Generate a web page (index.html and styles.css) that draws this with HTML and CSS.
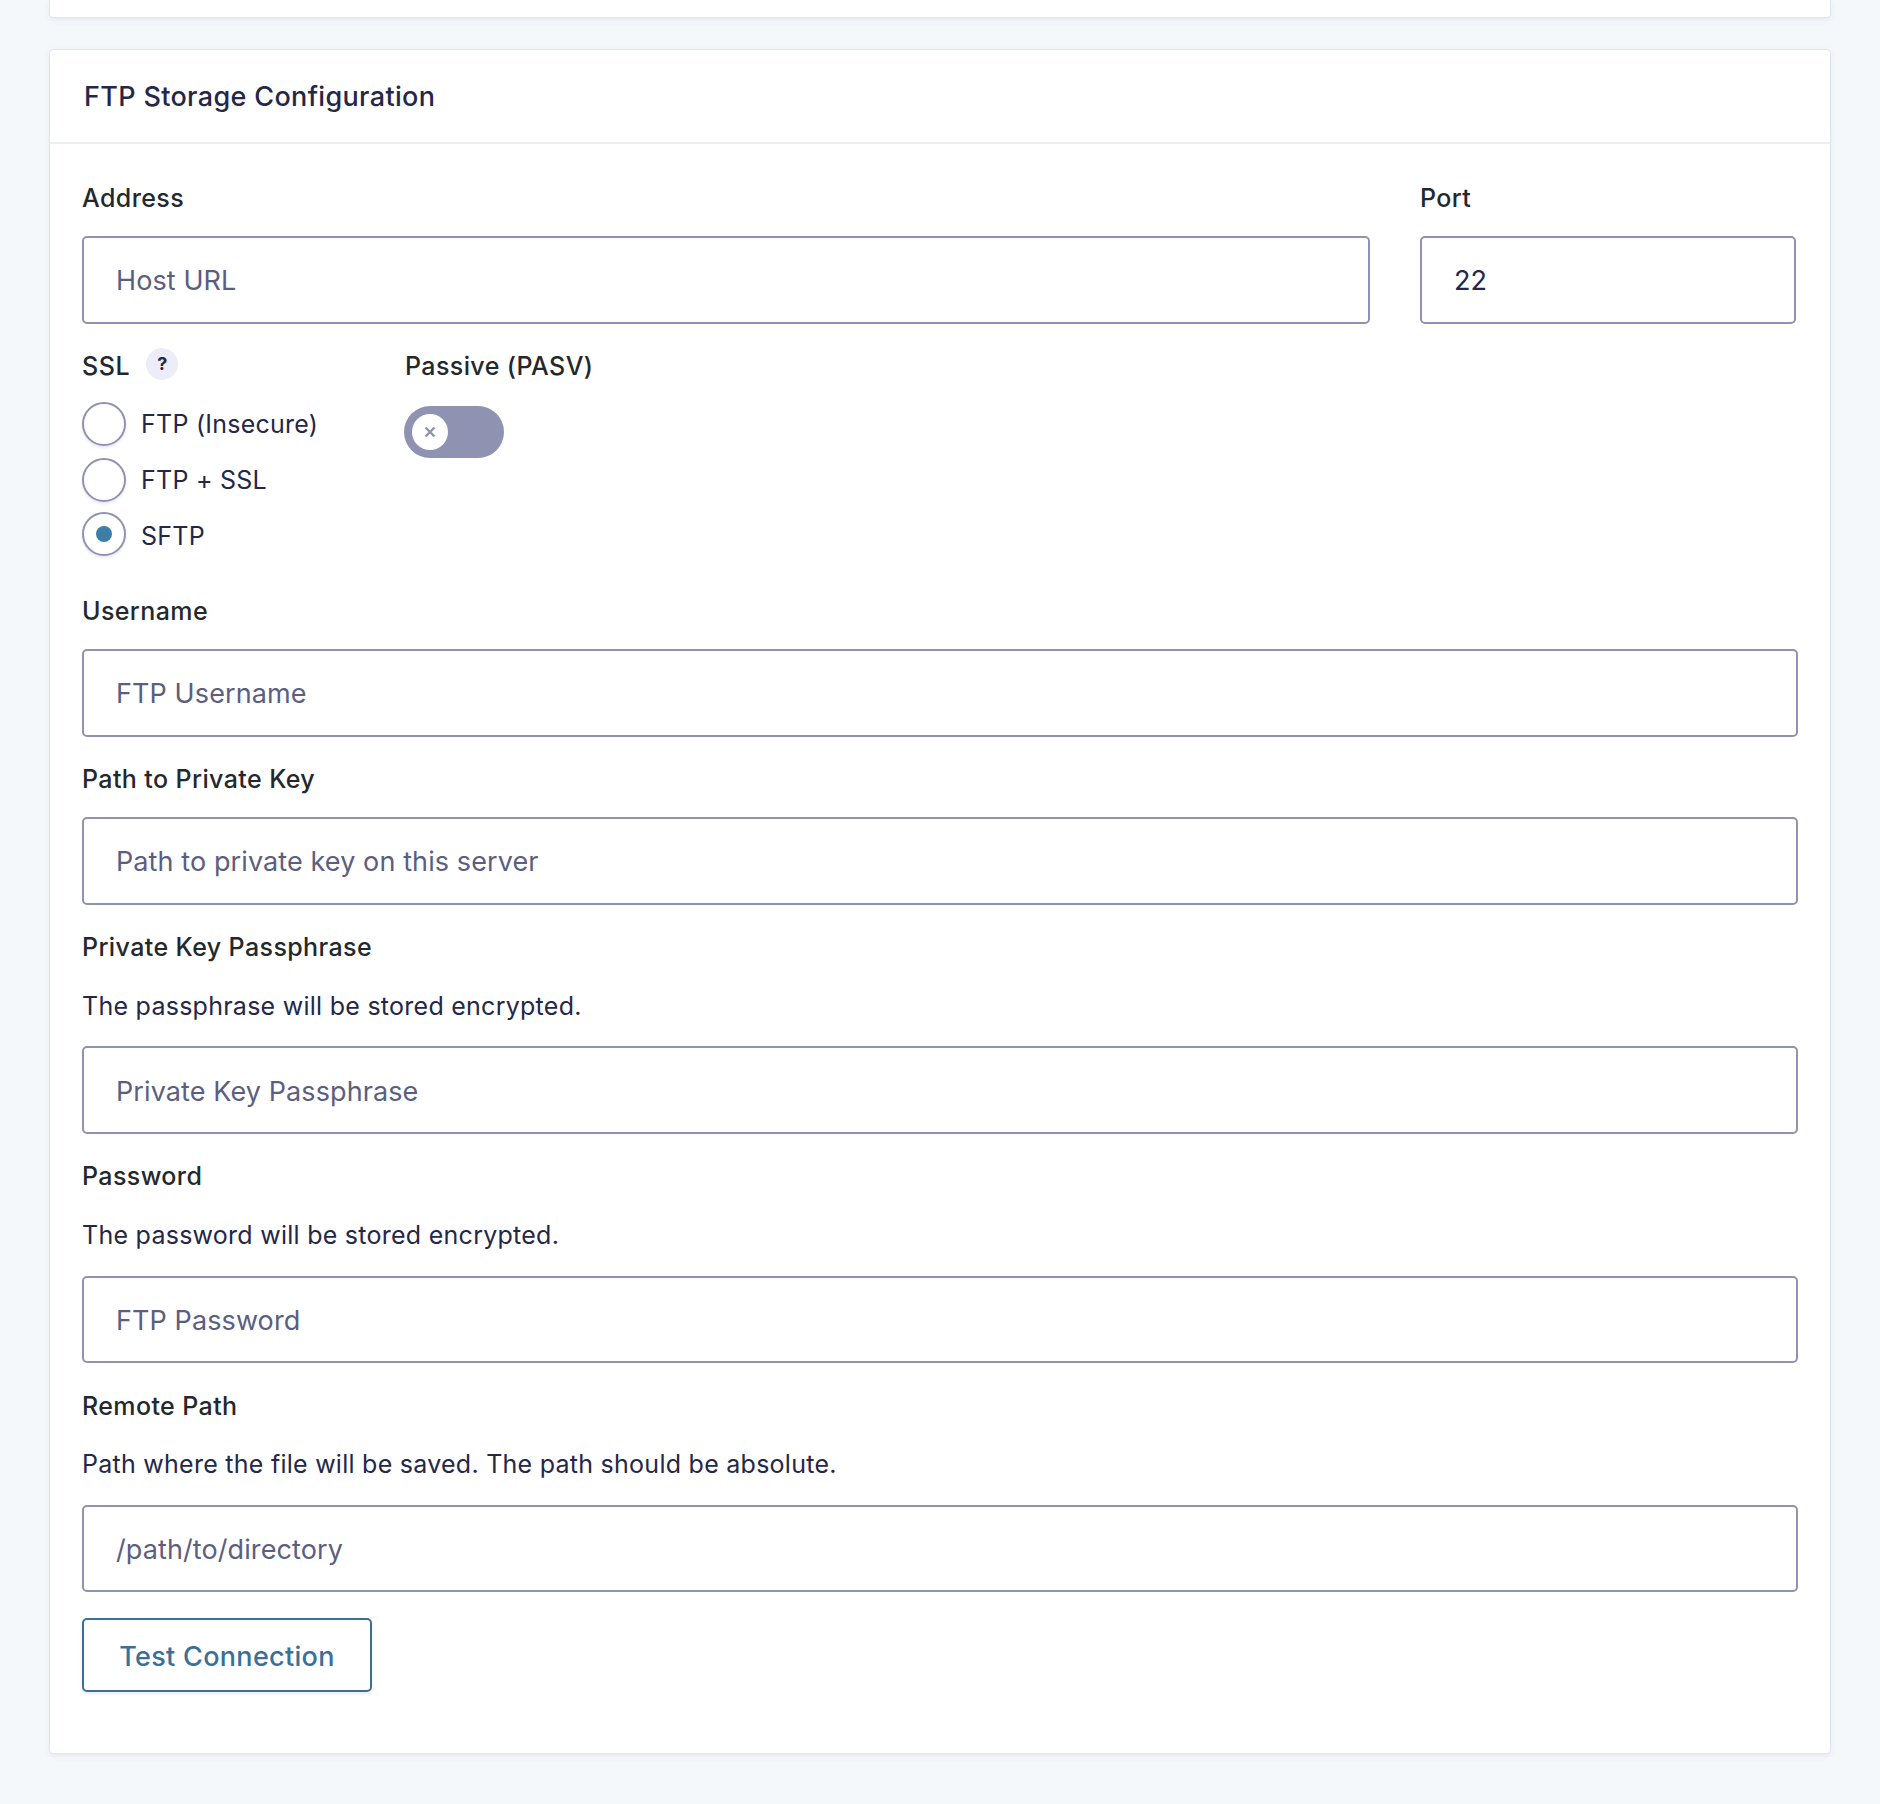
FILE: index.html
```html
<!DOCTYPE html>
<html>
<head>
  <title>FTP Storage Configuration</title>
  <meta charset="UTF-8">
  <link rel="stylesheet" href="styles.css">
</head>
<body>
  <div class="card card-stub"></div>

  <div class="card">
    <h3 class="card-title">FTP Storage Configuration</h3>

    <form class="card-body">
      <div class="address-row">
        <div>
          <label class="field-label" for="host">Address</label>
          <input class="text-input" id="host" type="text" placeholder="Host URL">
        </div>
        <div>
          <label class="field-label" for="port">Port</label>
          <input class="text-input" id="port" type="text" value="22">
        </div>
      </div>

      <div class="options-row">
        <div class="ssl-col">
          <div class="field-label ssl-label">SSL <span class="help-badge">?</span></div>
          <label class="radio-row"><input type="radio" name="ssl"><span>FTP (Insecure)</span></label>
          <label class="radio-row"><input type="radio" name="ssl"><span>FTP + SSL</span></label>
          <label class="radio-row radio-last"><input type="radio" name="ssl" checked><span>SFTP</span></label>
        </div>
        <div>
          <div class="field-label">Passive (PASV)</div>
          <div class="toggle">
            <span class="toggle-knob">
              <svg width="12" height="12" viewBox="0 0 12 12"><path d="M1.5 1.5l9 9M10.5 1.5l-9 9" stroke="#9092b2" stroke-width="2.4" fill="none"/></svg>
            </span>
          </div>
        </div>
      </div>

      <div class="field">
        <label class="field-label" for="user">Username</label>
        <input class="text-input" id="user" type="text" placeholder="FTP Username">
      </div>

      <div class="field">
        <label class="field-label" for="keypath">Path to Private Key</label>
        <input class="text-input" id="keypath" type="text" placeholder="Path to private key on this server">
      </div>

      <div class="field">
        <label class="field-label has-desc" for="phrase">Private Key Passphrase</label>
        <p class="field-desc">The passphrase will be stored encrypted.</p>
        <input class="text-input" id="phrase" type="text" placeholder="Private Key Passphrase">
      </div>

      <div class="field">
        <label class="field-label has-desc" for="pass">Password</label>
        <p class="field-desc">The password will be stored encrypted.</p>
        <input class="text-input" id="pass" type="text" placeholder="FTP Password">
      </div>

      <div class="field">
        <label class="field-label has-desc" for="remote">Remote Path</label>
        <p class="field-desc">Path where the file will be saved. The path should be absolute.</p>
        <input class="text-input" id="remote" type="text" placeholder="/path/to/directory">
      </div>

      <button class="btn-outline" type="button">Test Connection</button>
    </form>
  </div>
</body>
</html>
```

FILE: styles.css
```css
* {
  box-sizing: border-box;
}
body {
  margin: 0;
  padding: 0 49px 49px;
  background-color: #f5f8fb;
  font-family: Inter, "Liberation Sans", sans-serif;
  color: #242748;
}
.card {
  background-color: #fff;
  border: 1px solid #e2e5f2;
  border-radius: 4px;
  box-shadow: 0 2px 7px rgba(40, 50, 110, 0.08);
}
.card-stub {
  height: 18px;
  border-top: none;
  border-radius: 0 0 4px 4px;
  margin-bottom: 31px;
}
.card-title {
  margin: 0;
  height: 94px;
  padding: 0 34px;
  line-height: 93px;
  font-size: 27px;
  font-weight: 500;
  letter-spacing: 0.34px;
  border-bottom: 2px solid #ecedf5;
}
.card-body {
  padding: 39px 32px 61px 32px;
}
.address-row {
  display: grid;
  grid-template-columns: 1fr 376px;
  column-gap: 50px;
  padding-right: 2px;
}
.field-label {
  display: block;
  height: 30px;
  line-height: 30px;
  margin-bottom: 23px;
  font-size: 25px;
  font-weight: 500;
  letter-spacing: 0.4px;
  color: #23282d;
}
.field-label.has-desc {
  margin-bottom: 28.5px;
}
.field-desc {
  margin: 0 0 25.75px;
  height: 30px;
  line-height: 30px;
  font-size: 25px;
  letter-spacing: 0.26px;
  color: #242748;
}
.text-input {
  display: block;
  width: 100%;
  height: 87.5px;
  padding: 2px 32px 0;
  border: 2px solid #9092b2;
  border-radius: 5px;
  background: #fff;
  font-family: inherit;
  font-size: 27px;
  letter-spacing: 0.1px;
  color: #242748;
  outline: none;
}
.text-input::placeholder {
  color: #5b5e80;
  opacity: 1;
}
.options-row {
  display: flex;
  column-gap: 86px;
  margin-top: 27.5px;
}
.ssl-col {
  width: 237px;
}
.ssl-label {
  display: flex;
  align-items: center;
  margin-bottom: 21px;
  letter-spacing: 0.6px;
}
.help-badge {
  display: inline-flex;
  align-items: center;
  justify-content: center;
  width: 32px;
  height: 32px;
  margin: -4px 0 0 16px;
  border-radius: 50%;
  background-color: #ecedf8;
  font-size: 18px;
  font-weight: 700;
  letter-spacing: 0;
  color: #242748;
}
.radio-row {
  display: flex;
  align-items: center;
  column-gap: 15px;
  height: 44px;
  margin-bottom: 12px;
  font-size: 25px;
  letter-spacing: 0.25px;
  color: #242748;
}
.radio-row.radio-last {
  margin-top: -2px;
  margin-bottom: 0;
}
.radio-last span {
  padding-top: 4px;
}
.radio-row input {
  appearance: none;
  flex: none;
  display: flex;
  align-items: center;
  justify-content: center;
  width: 44px;
  height: 44px;
  margin: 0;
  border: 2px solid #9092b2;
  border-radius: 50%;
  background: #fff;
  box-shadow: 0 2px 3px rgba(40, 50, 110, 0.1);
}
.radio-row input:checked::before {
  content: "";
  width: 16px;
  height: 16px;
  border-radius: 50%;
  background-color: #3e7da6;
}
.toggle {
  display: flex;
  align-items: center;
  width: 100px;
  height: 52px;
  margin: 25px 0 0 -1px;
  padding-left: 8px;
  border-radius: 26px;
  background-color: #9092b2;
}
.toggle-knob {
  display: flex;
  align-items: center;
  justify-content: center;
  width: 36px;
  height: 36px;
  border-radius: 50%;
  background-color: #fff;
}
.field {
  margin-top: 27.5px;
}
.options-row + .field {
  margin-top: 40px;
}
.btn-outline {
  display: block;
  width: 290px;
  height: 74px;
  margin-top: 26px;
  padding-top: 3px;
  border: 2px solid #3a6f97;
  border-radius: 5px;
  background: #fff;
  box-shadow: 0 2px 3px rgba(40, 50, 110, 0.1);
  font-family: inherit;
  font-size: 27px;
  font-weight: 500;
  letter-spacing: 0.3px;
  color: #3a6f97;
}
```
